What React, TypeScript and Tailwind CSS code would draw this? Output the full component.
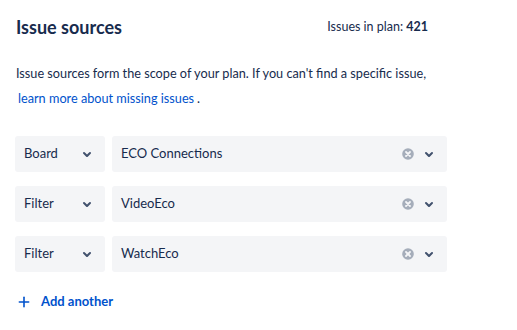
import { Plus } from 'lucide-react'

interface Source {
  type: string
  value: string
}

const sources: Source[] = [
  { type: 'Board', value: 'ECO Connections' },
  { type: 'Filter', value: 'VideoEco' },
  { type: 'Filter', value: 'WatchEco' },
]

function Chevron() {
  return (
    <svg width="24" height="24" viewBox="0 0 24 24" className="text-[#42526E] shrink-0">
      <path
        d="M8.292 10.293a1.009 1.009 0 000 1.419l2.939 2.965c.218.215.5.322.779.322s.556-.107.769-.322l2.93-2.955a1.01 1.01 0 000-1.419.987.987 0 00-1.406 0l-2.298 2.317-2.307-2.327a.99.99 0 00-1.406 0z"
        fill="currentColor"
      />
    </svg>
  )
}

function ClearIcon() {
  return (
    <svg width="16" height="16" viewBox="0 0 16 16">
      <circle cx="8" cy="8" r="5.8" fill="#A5ADBA" />
      <path d="M6 6l4 4M10 6l-4 4" stroke="#F4F5F7" strokeWidth="1.8" strokeLinecap="round" />
    </svg>
  )
}

export default function App() {
  return (
    <div className="w-[517px] h-[330px] bg-white text-[#172B4D] px-4 pt-[15px] font-['Lato',sans-serif]">
      <div className="flex items-center w-[412px] h-[24px]">
        <h2 className="flex-1 text-[18px] font-bold">Issue sources</h2>
        <div className="text-[12.5px]">
          Issues in plan: <span className="font-bold">421</span>
        </div>
      </div>

      <p className="mt-[22px] text-[12.7px] leading-[25px]">
        Issue sources form the scope of your plan. If you can't find a specific issue,
        <br />
        <a className="ml-[2px] text-[#0052CC] cursor-pointer">learn more about missing issues</a>
        <span className="ml-[3px]">.</span>
      </p>

      <div className="mt-[25px] -ml-px flex flex-col gap-[14px]">
        {sources.map((s, i) => (
          <div key={i} className="flex gap-[7px]">
            <div className="w-[90px] h-9 rounded-[3px] bg-[#F4F5F7] flex items-center pl-[9px] pr-[6px]">
              <span className="flex-1 text-[13px]">{s.type}</span>
              <Chevron />
            </div>
            <div className="w-[335px] h-9 rounded-[3px] bg-[#F4F5F7] flex items-center pl-[9px] pr-[6px]">
              <span className="flex-1 text-[13px]">{s.value}</span>
              <span className="w-[18px] flex justify-center">
                <ClearIcon />
              </span>
              <Chevron />
            </div>
          </div>
        ))}
      </div>

      <button className="mt-[20px] flex items-center gap-[9px] text-[#0052CC] text-[13px] font-bold">
        <Plus size={16} strokeWidth={2.4} />
        Add another
      </button>
    </div>
  )
}
